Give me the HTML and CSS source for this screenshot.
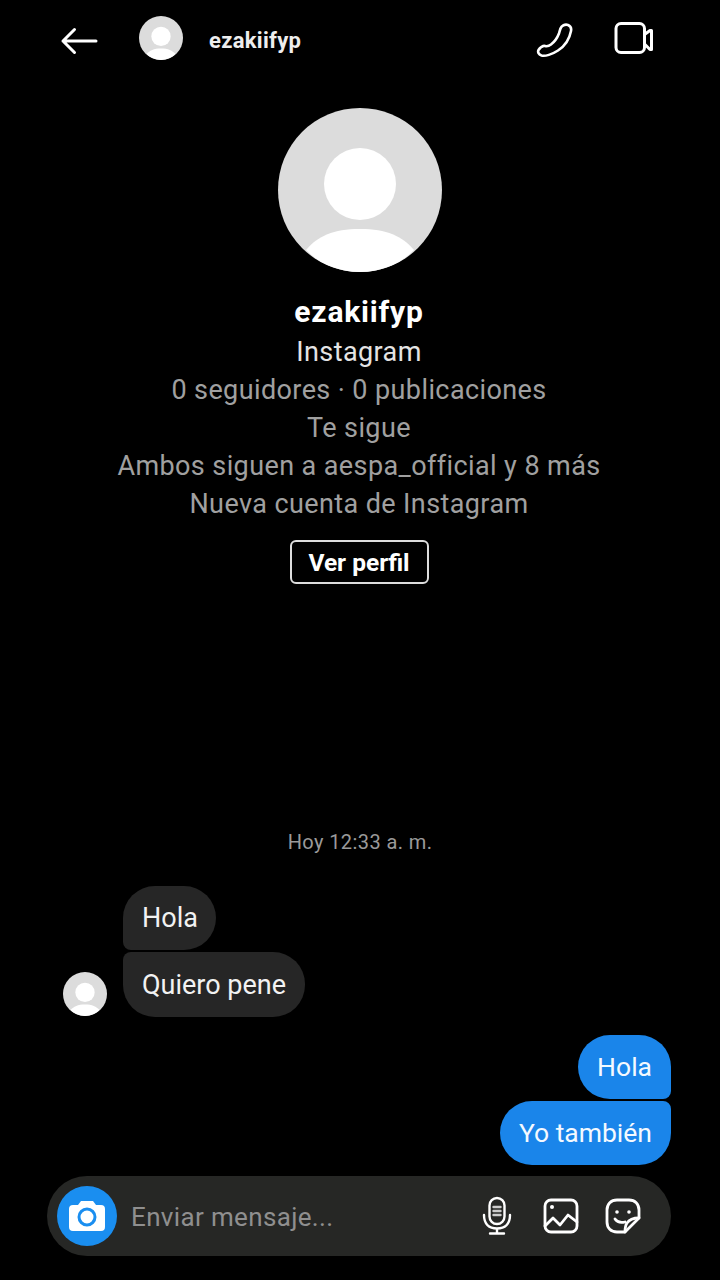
FILE: index.html
```html
<!DOCTYPE html>
<html lang="es">
<head>
<meta charset="utf-8">
<title>ezakiifyp</title>
<link rel="stylesheet" href="styles.css">
</head>
<body>
<main class="screen">
  <header class="topbar">
    <svg class="back" width="38" height="30" viewBox="0 0 38 30" fill="none" stroke="#fff" stroke-width="3" stroke-linecap="round" stroke-linejoin="round"><path d="M3 15H36M14.500 3.500 3 15 14.500 26.500"/></svg>
    <svg class="avatar-sm avatar-top" width="44" height="44" viewBox="0 0 164 164"><use href="#person"/></svg>
    <span class="topname">ezakiifyp</span>
    <svg class="phone" width="38" height="38" viewBox="0 0 38 38" fill="none" stroke="#fff" stroke-width="2.600" stroke-linejoin="round"><path d="M25.500 7.500C26.500 4.500 30 3 33 4C35.500 5 36.500 7.500 36 10C34.500 18 30 25 23 29.500C17 33.500 10 35.500 6.500 34.500C3.500 33.500 2.500 31 3.500 29C5 26.500 8 24.500 10 25C12 25.500 14 25 16 23.500C20 20.500 23 15 24 12.500C24.500 10.500 25 9 25.500 7.500Z"/></svg>
    <svg class="video" width="40" height="32" viewBox="0 0 40 32" fill="none" stroke="#fff" stroke-width="3" stroke-linejoin="round"><rect x="2" y="1.500" width="28.500" height="29" rx="5"/><path d="M30.500 12.500 36 8.500H37.500V27.500H36L30.500 22Z"/></svg>
  </header>

  <section class="profile">
    <svg class="avatar-lg" width="164" height="164" viewBox="0 0 164 164"><defs><g id="person"><circle cx="82" cy="82" r="82" fill="#dcdcdc"/><circle cx="82" cy="76" r="36" fill="#fff"/><path d="M28 142C40 128 55 121 82 121S124 128 136 142C123 156 103 164 82 164S41 156 28 142Z" fill="#fff"/></g></defs><use href="#person"/></svg>
    <h1 class="name">ezakiifyp</h1>
    <p class="line line-light">Instagram</p>
    <p class="line">0 seguidores · 0 publicaciones</p>
    <p class="line">Te sigue</p>
    <p class="line">Ambos siguen a aespa_official y 8 más</p>
    <p class="line">Nueva cuenta de Instagram</p>
    <div class="view-btn">Ver perfil</div>
  </section>

  <section class="chat">
    <p class="time">Hoy 12:33 a. m.</p>
    <div class="incoming">
      <svg class="avatar-sm avatar-chat" width="44" height="44" viewBox="0 0 164 164"><use href="#person"/></svg>
      <div class="stack stack-in">
        <div class="bubble in in-first">Hola</div>
        <div class="bubble in in-last">Quiero pene</div>
      </div>
    </div>
    <div class="stack stack-out">
      <div class="bubble out out-first">Hola</div>
      <div class="bubble out out-last">Yo también</div>
    </div>
  </section>

  <footer class="composer">
    <div class="cam">
      <svg width="38" height="32" viewBox="0 0 38 32"><path fill="#fff" d="M13 1h12l3 4h5a4 4 0 0 1 4 4v18a4 4 0 0 1-4 4H5a4 4 0 0 1-4-4V9a4 4 0 0 1 4-4h5Z"/><circle cx="19" cy="17" r="8" fill="none" stroke="#1a8ef0" stroke-width="3"/></svg>
    </div>
    <span class="placeholder">Enviar mensaje...</span>
    <svg class="mic" width="30" height="40" viewBox="0 0 30 40" fill="none" stroke="#fff" stroke-width="2.400" stroke-linecap="round"><rect x="7.500" y="2" width="15" height="26" rx="7.500"/><path d="M11.500 11h7M11.500 15h7M11.500 19h7" stroke="#ccc" stroke-width="2.400"/><path d="M2 19c0 9 5 13.500 13 13.500S28 28 28 19M15 32.500v5M8 37.500h14"/></svg>
    <svg class="pic" width="36" height="36" viewBox="0 0 36 36" fill="none" stroke="#fff" stroke-width="2.800" stroke-linejoin="round" stroke-linecap="round"><rect x="2" y="2" width="32" height="32" rx="6"/><circle cx="9" cy="9" r="2" fill="#fff" stroke="none"/><path d="M2 28 10 20 17 27 25 17 34 24"/></svg>
    <svg class="sticker" width="36" height="36" viewBox="0 0 36 36" fill="none" stroke="#fff" stroke-width="2.800" stroke-linejoin="round" stroke-linecap="round"><path d="M12 2h12c6 0 10 4 10 10v8L20 34h-8C6 34 2 30 2 24V12C2 6 6 2 12 2Z"/><path d="M20 34c0-3 0-6 2-9s7-5 12-5"/><circle cx="12" cy="14" r="1.800" fill="#fff" stroke="none"/><circle cx="24" cy="14" r="1.800" fill="#fff" stroke="none"/><path d="M10 21c2 3 6 4 10 3"/></svg>
  </footer>
</main>
</body>
</html>
```
FILE: styles.css
```css
* { box-sizing: border-box; }
html, body { margin: 0; background: #000; }
.screen {
  width: 720px;
  height: 1280px;
  overflow: hidden;
  display: flex;
  flex-direction: column;
  background: #000;
  color: #fff;
  font-family: Roboto, "Noto Sans", sans-serif;
}
.topbar {
  height: 78px;
  flex: none;
  display: flex;
  align-items: center;
  padding-left: 60px;
}
.back { margin-right: 41px; margin-top: 3px; }
.avatar-top { margin-top: -2px; }
.topname { margin-left: 26px; font-size: 22px; font-weight: 700; color: #eee; margin-top: 3px; letter-spacing: .3px; }
.phone { margin-left: auto; margin-top: 1px; }
.video { margin-left: 41px; margin-right: 66px; margin-top: -2px; }
.profile {
  flex: none;
  height: 506px;
  padding: 30px 2px 0 0;
  display: flex;
  flex-direction: column;
  align-items: center;
}
.avatar-lg { display: block; margin-bottom: 20px; margin-left: 1px; }
.name { margin: 0 0 1px; height: 40px; line-height: 40px; font-size: 30px; font-weight: 700; letter-spacing: .8px; }
.line { margin: 0; height: 38px; line-height: 38px; font-size: 27px; color: #a0a0a0; letter-spacing: .4px; }
.line-light { color: #e4e4e4; }
.view-btn {
  margin-top: 17px;
  width: 139px;
  height: 44px;
  padding-top: 1px;
  border: 2px solid #ddd;
  border-radius: 6px;
  display: flex;
  align-items: center;
  justify-content: center;
  font-size: 24.500px;
  font-weight: 700;
}
.chat { flex: none; height: 592px; display: flex; flex-direction: column; }
.time { margin: 246px 0 0; height: 24px; line-height: 24px; text-align: center; font-size: 20px; color: #9a9a9a; letter-spacing: .4px; }
.incoming { margin-top: 32px; margin-left: 63px; display: flex; align-items: flex-end; gap: 16px; }
.avatar-chat { margin-bottom: 1px; }
.stack { display: flex; flex-direction: column; gap: 2px; }
.stack-in { align-items: flex-start; }
.stack-out { align-items: flex-end; margin: 18px 49px 0 0; }
.bubble { height: 64px; line-height: 65px; padding: 0 19px; font-size: 27px; border-radius: 32px; }
.in { background: #262626; color: #f2f2f2; }
.in-first { padding-right: 18px; border-bottom-left-radius: 8px; }
.in-last { height: 65px; line-height: 67px; border-top-left-radius: 8px; }
.out { background: #1a85ea; color: #f4f9ff; line-height: 63px; font-size: 26.500px; }
.out-first { border-bottom-right-radius: 8px; }
.out-last { border-top-right-radius: 8px; }
.composer {
  flex: none;
  width: 624px;
  height: 80px;
  margin-left: 47px;
  border-radius: 40px;
  background: #262725;
  display: flex;
  align-items: center;
  padding-left: 10px;
}
.cam {
  width: 60px;
  height: 60px;
  border-radius: 50%;
  background: #1a8ef0;
  display: flex;
  align-items: center;
  justify-content: center;
}
.placeholder { margin-left: 14px; margin-top: 2px; font-size: 26px; color: #8f8f8f; letter-spacing: .35px; }
.mic { margin-left: auto; }
.pic { margin-left: 31px; }
.sticker { margin-left: 26px; margin-right: 30px; }
```
